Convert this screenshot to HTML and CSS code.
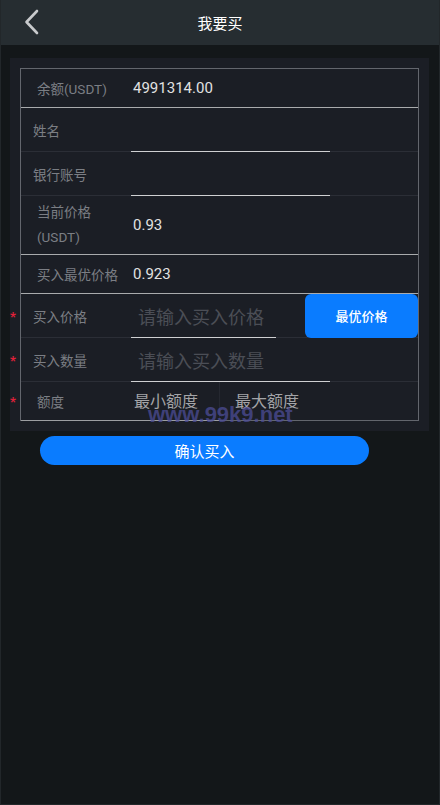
FILE: index.html
```html
<!DOCTYPE html>
<html lang="zh-CN">
<head>
<meta charset="utf-8">
<meta name="viewport" content="width=device-width, initial-scale=1">
<title>我要买</title>
<link rel="stylesheet" href="styles.css">
</head>
<body>
<div class="page">
  <header class="topbar">
    <a class="back" href="#" aria-label="返回">
      <svg width="16" height="26" viewBox="0 0 16 26"><polyline points="13,2 2.5,13 13,24" fill="none" stroke="#c8cacc" stroke-width="2.6" stroke-linecap="round" stroke-linejoin="round"/></svg>
    </a>
    <h1 class="title">我要买</h1>
  </header>

  <main class="panel">
    <div class="box">
      <div class="row row-info bright">
        <span class="label wide">余额(USDT)</span>
        <span class="value">4991314.00</span>
      </div>
      <div class="row row-input faint">
        <span class="label">姓名</span>
        <input class="field" type="text">
      </div>
      <div class="row row-input faint">
        <span class="label">银行账号</span>
        <input class="field" type="text">
      </div>
      <div class="row row-tall bright">
        <span class="label wide two">当前价格<br>(USDT)</span>
        <span class="value">0.93</span>
      </div>
      <div class="row row-info bright">
        <span class="label wide">买入最优价格</span>
        <span class="value">0.923</span>
      </div>
      <div class="row row-input faint req">
        <span class="label">买入价格</span>
        <input class="field short" type="text" placeholder="请输入买入价格">
        <button class="best" type="button">最优价格</button>
      </div>
      <div class="row row-input faint req">
        <span class="label">买入数量</span>
        <input class="field" type="text" placeholder="请输入买入数量">
      </div>
      <div class="row row-limit req">
        <div class="limit-left">
          <span class="label wide">额度</span>
          <span class="limit">最小额度</span>
        </div>
        <div class="limit-right">
          <span class="limit">最大额度</span>
        </div>
      </div>
      <div class="watermark">www.99k9.net</div>
    </div>
  </main>

  <div class="actions">
    <button class="confirm" type="button">确认买入</button>
  </div>
</div>
</body>
</html>
```

FILE: styles.css
```css
* { box-sizing: border-box; }
html, body { margin: 0; padding: 0; }
body {
  background: #131719;
  font-family: Roboto, "Noto Sans CJK SC", sans-serif;
  color: #dcdcdc;
}
.page {
  min-height: 805px;
  border-left: 1px solid #22272a;
  border-right: 1px solid #22272a;
  border-bottom: 1px solid #22272a;
}
.topbar {
  height: 45px;
  background: #262d31;
  display: flex;
  align-items: center;
  justify-content: center;
  position: relative;
}
.back {
  position: absolute;
  left: 23px;
  top: 9px;
  display: block;
  width: 16px;
  height: 26px;
}
.back svg { display: block; }
.title {
  margin: 0;
  font-size: 15px;
  font-weight: normal;
  color: #ffffff;
  letter-spacing: 0;
}
.panel {
  margin: 13px 10px 0 9px;
  padding: 10px;
  background: #1b1e25;
}
.box {
  position: relative;
  border: 1px solid #63666d;
}
.row {
  position: relative;
  display: flex;
  align-items: center;
}
.row.bright { border-bottom: 1px solid #a9abad; }
.row.faint { border-bottom: 1px solid #2b2e36; }
.row-info { height: 39px; }
.row-input { height: 44px; }
.row-tall { height: 59px; }
.row-limit { height: 38px; align-items: stretch; }
.req::before {
  content: "*";
  position: absolute;
  left: -11px;
  top: 50%;
  transform: translateY(-50%);
  color: #e0213a;
  font-size: 13px;
  font-weight: bold;
}
.label {
  width: 110px;
  flex: none;
  padding-left: 12px;
  font-size: 13.5px;
  color: #7b7e84;
}
.label.wide {
  width: 112px;
  padding-left: 16px;
}
.label.two { line-height: 25px; }
.value {
  font-size: 15px;
  color: #e2e2e2;
}
.field {
  align-self: stretch;
  margin-bottom: -1px;
  width: 199px;
  flex: none;
  background: transparent;
  border: none;
  border-bottom: 1px solid #cfd0d2;
  outline: none;
  padding: 0 0 0 7px;
  font-family: "Noto Sans CJK SC", sans-serif;
  font-size: 18px;
  color: #dcdcdc;
}
.field.short { width: 145px; }
.field::placeholder { color: #4b4e56; }
.best {
  align-self: stretch;
  margin: 0 0 -1px auto;
  width: 113px;
  flex: none;
  border: none;
  border-radius: 6px;
  background: #0a7cff;
  color: #ffffff;
  font-family: "Noto Sans CJK SC", sans-serif;
  font-size: 13px;
  font-weight: 500;
  padding: 0 0 2px;
}
.limit-left {
  width: 199px;
  display: flex;
  align-items: center;
  border-bottom: 1px solid #9c9ea1;
  margin-bottom: -1px;
  border-right: 1px solid #252830;
}
.limit-right {
  flex: 1;
  display: flex;
  align-items: center;
  padding-left: 15px;
}
.limit {
  font-family: "Noto Sans CJK SC", sans-serif;
  font-size: 16px;
  color: #a3a4a7;
  padding-bottom: 2px;
}
.row-limit .label.wide { width: 113px; }
.watermark {
  position: absolute;
  left: 127px;
  top: 333px;
  font-family: "Liberation Sans", Arial, sans-serif;
  font-size: 22px;
  font-weight: bold;
  color: rgba(78, 78, 155, 0.72);
  pointer-events: none;
  white-space: nowrap;
}
.actions {
  padding: 5px 0 0 39px;
}
.confirm {
  display: block;
  width: 329px;
  height: 29px;
  border: none;
  border-radius: 15px;
  background: #0a7cff;
  color: #ffffff;
  font-family: "Noto Sans CJK SC", sans-serif;
  font-size: 15px;
  padding: 0;
}
```
